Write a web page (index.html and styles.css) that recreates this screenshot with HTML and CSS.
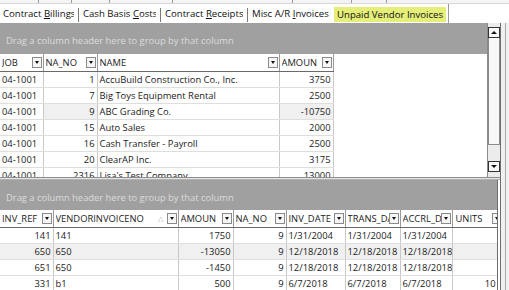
FILE: index.html
```html
<!DOCTYPE html>
<html>
<head>
<meta charset="utf-8">
<link rel="stylesheet" href="styles.css">
</head>
<body>
<div class="app">
  <div class="strip">
    <span class="seg w39"></span><span class="seg w33"></span><span class="seg w37"></span><span class="seg w63"></span><span class="seg w120"></span><span class="seg w59"></span><span class="seg w35"></span>
  </div>
  <div class="tabs">
    <div class="tab t1">Contract <u>B</u>illings</div>
    <span class="sep"></span>
    <div class="tab t2">Cash Basis <u>C</u>osts</div>
    <span class="sep"></span>
    <div class="tab t3">Contract <u>R</u>eceipts</div>
    <span class="sep"></span>
    <div class="tab t4">Misc A/R <u>I</u>nvoices</div>
    <div class="tab active"><span class="hl">Unpaid Vendor Invoices</span></div>
  </div>
  <div class="main">
    <div class="panel">
      <div class="top">
        <div class="grid">
          <div class="groupbar gb-top">Drag a column header here to group by that column</div>
          <table class="tbl tbl-top">
            <colgroup><col class="c43"><col class="c54"><col class="c182"><col class="c54"></colgroup>
            <thead>
              <tr>
                <th><div class="hc"><span class="ht">JOB</span><span class="dd"></span></div></th>
                <th><div class="hc"><span class="ht">NA_NO</span><span class="dd"></span></div></th>
                <th><div class="hc"><span class="ht">NAME</span><span class="dd"></span></div></th>
                <th><div class="hc"><span class="ht">AMOUN</span><span class="dd"></span></div></th>
              </tr>
            </thead>
            <tbody>
              <tr><td>04-1001</td><td class="num">1</td><td>AccuBuild Construction Co., Inc.</td><td class="num">3750</td></tr>
              <tr><td>04-1001</td><td class="num">7</td><td>Big Toys Equipment Rental</td><td class="num">2500</td></tr>
              <tr><td>04-1001</td><td class="num shade">9</td><td>ABC Grading Co.</td><td class="num shade">-10750</td></tr>
              <tr><td>04-1001</td><td class="num">15</td><td>Auto Sales</td><td class="num">2000</td></tr>
              <tr><td>04-1001</td><td class="num">16</td><td>Cash Transfer - Payroll</td><td class="num">2500</td></tr>
              <tr><td>04-1001</td><td class="num">20</td><td>ClearAP Inc.</td><td class="num">3175</td></tr>
              <tr><td>04-1001</td><td class="num">2316</td><td>Lisa's Test Company</td><td class="num">13000</td></tr>
            </tbody>
          </table>
        </div>
        <div class="vscroll">
          <div class="sbtn"><span class="tri-up"></span></div>
          <div class="thumb"></div>
          <div class="track"></div>
          <div class="sbtn"><span class="tri-dn"></span></div>
        </div>
      </div>
      <div class="splitter"></div>
      <div class="grid bottom">
        <div class="groupbar">Drag a column header here to group by that column</div>
        <table class="tbl tbl-bottom">
          <colgroup><col class="c53"><col class="c125"><col class="c55"><col class="c53"><col class="c59"><col class="c55"><col class="c52"><col class="c46"></colgroup>
          <thead>
            <tr>
              <th><div class="hc"><span class="ht">INV_REF</span><span class="dd"></span></div></th>
              <th><div class="hc"><span class="ht">VENDORINVOICENO</span><span class="sort">△</span><span class="dd"></span></div></th>
              <th><div class="hc"><span class="ht">AMOUN</span><span class="dd"></span></div></th>
              <th><div class="hc"><span class="ht">NA_NO</span><span class="dd"></span></div></th>
              <th><div class="hc"><span class="ht">INV_DATE</span><span class="dd"></span></div></th>
              <th><div class="hc"><span class="ht">TRANS_DATE</span><span class="dd"></span></div></th>
              <th><div class="hc"><span class="ht">ACCRL_DATE</span><span class="dd"></span></div></th>
              <th class="last"><div class="hc"><span class="ht">UNITS</span><span class="dd"></span></div></th>
            </tr>
          </thead>
          <tbody>
            <tr><td class="num">141</td><td>141</td><td class="num">1750</td><td class="num">9</td><td>1/31/2004</td><td>1/31/2004</td><td>1/31/2004</td><td class="num"></td></tr>
            <tr class="shade"><td class="num">650</td><td>650</td><td class="num">-13050</td><td class="num">9</td><td>12/18/2018</td><td>12/18/2018</td><td>12/18/2018</td><td class="num"></td></tr>
            <tr><td class="num">651</td><td>650</td><td class="num">-1450</td><td class="num">9</td><td>12/18/2018</td><td>12/18/2018</td><td>12/18/2018</td><td class="num"></td></tr>
            <tr><td class="num">331</td><td>b1</td><td class="num">500</td><td class="num">9</td><td>6/7/2018</td><td>6/7/2018</td><td>6/7/2018</td><td class="num">10</td></tr>
          </tbody>
        </table>
      </div>
    </div>
    <div class="frame"><div class="frame-in"></div></div>
  </div>
</div>
</body>
</html>
```
FILE: styles.css
```css
* { box-sizing: border-box; }
html, body { margin: 0; padding: 0; }
body {
  width: 509px;
  height: 290px;
  overflow: hidden;
  background: #ffffff;
  font-family: "Open Sans", "Noto Sans", sans-serif;
  font-size: 9.4px;
  color: #222;
}
.app { display: flex; flex-direction: column; height: 290px; }

.strip { height: 4px; display: flex; background: #f4f4f4; border-bottom: 1px solid #d8d8d8; }
.seg { border-right: 1px solid #9a9a9a; height: 3px; }
.w39 { width: 39px; } .w33 { width: 33px; } .w37 { width: 38px; } .w63 { width: 63px; }
.w120 { width: 120px; } .w59 { width: 59px; } .w35 { width: 35px; }

.tabs { height: 19px; display: flex; padding-left: 3px; background: #fff; }
.tab { white-space: nowrap; padding-top: 3px; line-height: 14px; overflow: hidden; color: #111; font-size: 9.6px; }
.tab u { text-decoration: underline; text-underline-offset: 1px; }
.t1 { width: 71px; } .t2 { width: 73px; } .t3 { width: 78px; } .t4 { width: 77px; }
.sep { width: 1px; background: #7a7a7a; margin: 4px 4px 1px; }
.active { margin-left: 4px; width: 116px; padding-left: 1px; padding-top: 3px; border-right: 1px solid #9a9a9a; }
.hl { background: #e4ee78; display: inline-block; padding: 0 3px 0 3px; line-height: 15px; }

.main { flex: 1; display: flex; min-height: 0; }
.panel { width: 500px; display: flex; flex-direction: column; }
.frame { width: 9px; background: #f0f0f0; border-left: 1px solid #6e6e6e; padding-left: 4px; }
.frame-in { height: 100%; border-left: 1px solid #a8a8a8; }

.top { height: 155px; display: flex; border-bottom: 1px solid #8c8c8c; }
.grid { overflow: hidden; background: #fff; }
.top .grid { width: 487px; }
.bottom { flex: 1; width: 498px; border-right: 1px solid #6e6e6e; }

.groupbar {
  height: 30px;
  background: #a0a0a0;
  color: #dcdcdc;
  padding: 11px 0 0 6px;
  line-height: 14px;
  white-space: nowrap;
}
.gb-top { height: 31px; }

.tbl { border-collapse: collapse; table-layout: fixed; }
.tbl-top { width: 333px; }
.tbl-bottom { width: 498px; }
.c43 { width: 43px; } .c54 { width: 54px; } .c182 { width: 182px; }
.c53 { width: 53px; } .c125 { width: 125px; } .c55 { width: 55px; }
.c59 { width: 59px; } .c52 { width: 52px; } .c46 { width: 46px; }

.tbl th {
  height: 17px;
  padding: 0;
  font-weight: normal;
  text-align: left;
  border-right: 1px solid #9a9a9a;
  border-bottom: 1px solid #6a6a6a;
  background: #fff;
}
.hc { display: flex; align-items: center; height: 16px; padding: 0 1px 0 2px; overflow: hidden; }
.ht { flex: 1; overflow: hidden; white-space: nowrap; color: #222; min-width: 0; }
.sort { color: #b0b0b0; font-size: 7px; margin: 0 4px 0 2px; }
.dd {
  width: 10px; height: 11px; flex: none;
  border: 1px solid #8a8a8a; background: #f6f6f6;
  display: flex; align-items: center; justify-content: center;
}
.dd::after {
  content: "";
  border-left: 2.5px solid transparent;
  border-right: 2.5px solid transparent;
  border-top: 3px solid #111;
}
.last .hc { padding-right: 0; }
.last .dd { margin-right: -4px; }
.last .ht { padding-left: 1px; }

.tbl td {
  height: 16px;
  padding: 0 2px;
  white-space: nowrap;
  overflow: hidden;
  border-right: 1px solid #c8c8c8;
  border-bottom: 1px solid #dedede;
  line-height: 15px;
  color: #222;
}
.tbl td.num { text-align: right; padding-right: 2px; }
.tbl td.shade, .tbl tr.shade td { background: #f0f0f0; }

.vscroll {
  width: 13px;
  display: flex;
  flex-direction: column;
  background: #ececec;
  border-left: 1px solid #8a8a8a;
  padding-top: 4px;
  padding-bottom: 5px;
}
.sbtn {
  height: 11px;
  border: 1px solid #333;
  background: #f8f8f8;
  display: flex; align-items: center; justify-content: center;
}
.tri-up { border-left: 3px solid transparent; border-right: 3px solid transparent; border-bottom: 3px solid #111; }
.tri-dn { border-left: 3px solid transparent; border-right: 3px solid transparent; border-top: 3px solid #111; }
.thumb { height: 107px; background: #f8f8f8; border: 1px solid #8a8a8a; border-top: none; }
.track { flex: 1; }

.splitter { height: 2px; background: #e6e6e6; border-bottom: 1px solid #b0b0b0; }
```
